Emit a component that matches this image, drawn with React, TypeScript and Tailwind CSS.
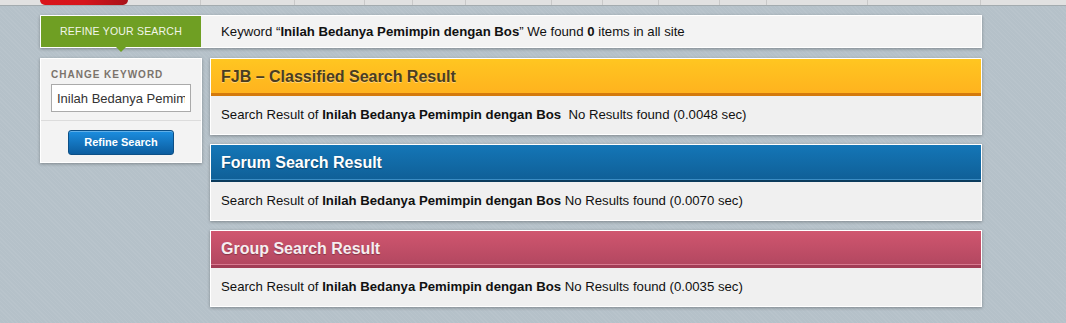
import React from 'react';

const font = "font-['Liberation_Sans',Arial,sans-serif]";

const keyword = 'Inilah Bedanya Pemimpin dengan Bos';

// top navigation strip segment widths (only the bottom edge is visible)
const navSegments = [201, 94, 70, 48, 53, 86, 51, 56, 61, 47, 101, 113];

type PanelProps = {
  title: string;
  head: string;
  titleColor: string;
  time: string;
  wideGap?: boolean;
};

const ResultPanel: React.FC<PanelProps> = ({ title, head, titleColor, time, wideGap }) => (
  <div className="border border-white bg-[#f1f1f1] shadow-[0_1px_3px_rgba(0,0,0,0.3)]">
    <div className={`h-[37px] flex items-center px-[10px] pb-[2px] ${head}`}>
      <h2 className={`text-[16px] font-bold ${titleColor}`}>{title}</h2>
    </div>
    <div className="h-[38px] flex items-center px-[10px] text-[13.2px] text-[#111] bg-[#f0f0f0]">
      <p className="whitespace-pre">
        Search Result of <b>{keyword}</b>
        {wideGap ? '  ' : ' '}No Results found ({time} sec)
      </p>
    </div>
  </div>
);

const App: React.FC = () => {
  return (
    <div
      className={`${font} w-[1066px] h-[323px] overflow-hidden bg-[#b5c1c9] bg-[repeating-linear-gradient(45deg,rgba(255,255,255,0.05)_0px,rgba(255,255,255,0.05)_1px,transparent_1px,transparent_3px)]`}
    >
      {/* top navigation strip */}
      <div className="relative h-[6px] flex bg-[#e1e1e1] border-b border-[#a3abaf]">
        {navSegments.map((w, i) => (
          <div key={i} className="h-full border-r border-[#c9c9c9]" style={{ width: w }} />
        ))}
        <div className="absolute left-[40px] top-0 w-[88px] h-[5px] rounded-b-[6px] bg-gradient-to-r from-[#d9151c] via-[#d6141b] to-[#a8121a]" />
      </div>

      <div className="ml-[40px] w-[942px] mt-[9px]">
        {/* keyword bar */}
        <div className="flex h-[33px] border border-white bg-[#f3f3f3] shadow-[0_1px_3px_rgba(0,0,0,0.3)]">
          <div className="relative w-[160px] bg-[#6f9f23] flex items-center justify-center">
            <span className="text-[10.5px] tracking-[0.2px] text-[#f2f6ea]">REFINE YOUR SEARCH</span>
            <span className="absolute left-1/2 -translate-x-1/2 -bottom-[5px] w-0 h-0 border-x-[5px] border-x-transparent border-t-[5px] border-t-[#6f9f23]" />
          </div>
          <div className="flex items-center pl-[20px] text-[13.2px] text-[#111]">
            <p>
              Keyword “<b>{keyword}</b>” We found <b>0</b> items in all site
            </p>
          </div>
        </div>

        <div className="flex gap-[8px] mt-[10px]">
          {/* sidebar */}
          <div className="w-[162px] h-[105px] shrink-0 border border-white bg-[#f3f3f3] shadow-[0_1px_3px_rgba(0,0,0,0.3)]">
            <div className="px-[10px] pt-[10px] pb-[8px] border-b border-[#dcdcdc]">
              <div className="text-[10px] font-bold tracking-[1px] text-[#7b736c] leading-[12px]">CHANGE KEYWORD</div>
              <input
                readOnly
                value={keyword}
                className="mt-[3px] w-[140px] h-[28px] border border-[#aaa] bg-white px-[5px] text-[13px] text-[#333] outline-none"
              />
            </div>
            <div className="flex justify-center pt-[9px]">
              <button className="w-[106px] h-[25px] rounded-[3px] border border-[#0c4f86] bg-gradient-to-b from-[#1c8ee0] to-[#0c5d9f] text-[11px] font-bold text-white shadow-[inset_0_1px_0_rgba(255,255,255,0.3)]">
                Refine Search
              </button>
            </div>
          </div>

          {/* results */}
          <div className="flex-1 flex flex-col gap-[9px]">
            <ResultPanel
              title="FJB – Classified Search Result"
              head="bg-gradient-to-b from-[#ffc621] to-[#ffb11e] shadow-[inset_0_-3px_0_#d47a0c]"
              titleColor="text-[#4a3d22] [text-shadow:0_1px_0_rgba(255,255,255,0.4)]"
              time="0.0048"
              wideGap
            />
            <ResultPanel
              title="Forum Search Result"
              head="bg-gradient-to-b from-[#1476b7] to-[#0f5e95] shadow-[inset_0_-2px_0_#0b3b5c,inset_0_-3px_0_#3b8dc4]"
              titleColor="text-white [text-shadow:0_1px_1px_rgba(0,0,0,0.4)]"
              time="0.0070"
            />
            <ResultPanel
              title="Group Search Result"
              head="bg-gradient-to-b from-[#d0566f] to-[#b0465f] shadow-[inset_0_-3px_0_#a23d56,inset_0_-4px_0_#d87a90]"
              titleColor="text-[#f7eef0] [text-shadow:0_1px_1px_rgba(0,0,0,0.3)]"
              time="0.0035"
            />
          </div>
        </div>
      </div>
    </div>
  );
};

export default App;
